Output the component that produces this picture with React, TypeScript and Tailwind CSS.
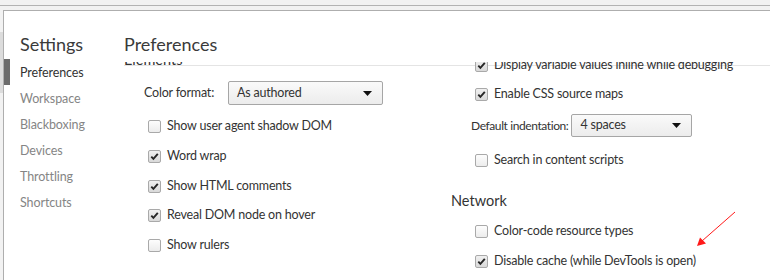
import type { ReactNode } from "react";

const font = { fontFamily: "Lato, 'Open Sans', sans-serif" };

const sidebarItems = ["Preferences", "Workspace", "Blackboxing", "Devices", "Throttling", "Shortcuts"];

function Checkbox({ checked }: { checked?: boolean }) {
  return (
    <span
      className={`flex h-[13px] w-[13px] shrink-0 items-center justify-center rounded-[2px] border border-[#a9a9a9] ${
        checked ? "bg-gradient-to-b from-[#f0f0f0] to-[#d9d9d9]" : "bg-gradient-to-b from-[#fdfdfd] to-[#ececec]"
      }`}
    >
      {checked && (
        <svg width="9" height="9" viewBox="0 0 9 9">
          <path d="M1.3 4.6 L3.4 6.8 L7.8 1.8" fill="none" stroke="#262626" strokeWidth="1.9" />
        </svg>
      )}
    </span>
  );
}

function CheckRow({ label, checked, h = "h-[30px]", className = "" }: { label: string; checked?: boolean; h?: string; className?: string }) {
  return (
    <div className={`flex items-center gap-[6px] pl-[24px] ${h} ${className}`}>
      <Checkbox checked={checked} />
      <span className="whitespace-nowrap text-[12.5px] tracking-[-0.2px] text-[#333]">{label}</span>
    </div>
  );
}

function Select({ value, width }: { value: string; width: string }) {
  return (
    <div
      className={`flex h-full shrink-0 items-center justify-between rounded-[2px] border border-[#a6a6a6] bg-gradient-to-b from-[#fafafa] to-[#ececec] pl-[8px] pr-[10px] ${width}`}
    >
      <span className="text-[12.5px] tracking-[-0.2px] text-[#333]">{value}</span>
      <svg width="9" height="5" viewBox="0 0 9 5">
        <path d="M0 0 H9 L4.5 5 Z" fill="#111" />
      </svg>
    </div>
  );
}

function SelectRow({ label, labelW, value, selectW, className }: { label: string; labelW: string; value: string; selectW: string; className: string }) {
  return (
    <div className={`flex items-center pl-[20px] ${className}`}>
      <span className={`shrink-0 whitespace-nowrap text-[#333] ${labelW}`}>{label}</span>
      <Select value={value} width={selectW} />
    </div>
  );
}

function SectionTitle({ children, className = "" }: { children: ReactNode; className?: string }) {
  return <div className={`flex h-[20px] items-center text-[14.5px] text-[#333] ${className}`}>{children}</div>;
}

export default function App() {
  return (
    <div className="relative h-[280px] w-[770px] overflow-hidden bg-[#f2f2f2]" style={font}>
      <div className="h-[5px]" />
      <div className="h-px bg-[#b3b3b3]" />
      <div className="h-[4px]" />
      <div className="flex h-[270px]">
        <div className="w-[3px] pt-[22px]">
          <div className="h-[61px] bg-[#dcdcdc]" />
        </div>
        <div className="flex flex-1 border-l border-t border-[#aeaeae] bg-white">
          <div className="w-[120px] shrink-0">
            <div className="mt-[21px] flex h-[24px] items-center pl-[16px] text-[18px] text-[#3a3a3a]">Settings</div>
            <div className="mt-[3px]">
              {sidebarItems.map((item, i) => (
                <div
                  key={item}
                  className={`flex h-[26px] items-center text-[12.5px] tracking-[-0.1px] ${
                    i === 0 ? "border-l-[6px] border-[#6b6b6b] pl-[10px] text-[#333]" : "pl-[16px] text-[#858585]"
                  }`}
                >
                  <span className="pt-[2px]">{item}</span>
                </div>
              ))}
            </div>
          </div>

          <div className="flex min-w-0 flex-1 flex-col">
            <div className="flex h-[55px] shrink-0 items-end border-b border-[#e4e4e4] pb-[9px]">
              <span className="text-[18px] leading-[24px] text-[#3a3a3a]">Preferences</span>
            </div>
            <div className="-mt-[4px] flex flex-1 overflow-hidden">
              <div className="-mt-[12px] w-[327px] shrink-0">
                <SectionTitle>Elements</SectionTitle>
                <SelectRow
                  label="Color format:"
                  labelW="w-[84px] text-[12.5px] tracking-[-0.2px]"
                  value="As authored"
                  selectW="w-[155px]"
                  className="mt-[11px] h-[24px]"
                />
                <CheckRow label="Show user agent shadow DOM" className="mt-[6px]" />
                <CheckRow label="Word wrap" checked />
                <CheckRow label="Show HTML comments" checked />
                <CheckRow label="Reveal DOM node on hover" checked h="h-[29px]" />
                <CheckRow label="Show rulers" />
              </div>
              <div className="-mt-[11px] flex-1">
                <CheckRow label="Display variable values inline while debugging" checked h="h-[29px]" />
                <CheckRow label="Enable CSS source maps" checked h="h-[29px]" />
                <SelectRow
                  label="Default indentation:"
                  labelW="pr-[3px] text-[12px] tracking-[-0.4px]"
                  value="4 spaces"
                  selectW="w-[121px]"
                  className="mt-[5px] h-[23px]"
                />
                <CheckRow label="Search in content scripts" className="mt-[8px]" />
                <SectionTitle className="mt-[16px]">Network</SectionTitle>
                <CheckRow label="Color-code resource types" className="mt-[5px]" />
                <CheckRow label="Disable cache (while DevTools is open)" checked />
              </div>
            </div>
          </div>
        </div>
      </div>

      <svg className="absolute left-[690px] top-[205px]" width="60" height="50" viewBox="690 205 60 50">
        <line x1="735" y1="212" x2="702" y2="241" stroke="#ff1a1a" strokeWidth="1" />
        <path d="M697 246 L700 237.5 L706 243.5 Z" fill="#ff1a1a" />
      </svg>
    </div>
  );
}
